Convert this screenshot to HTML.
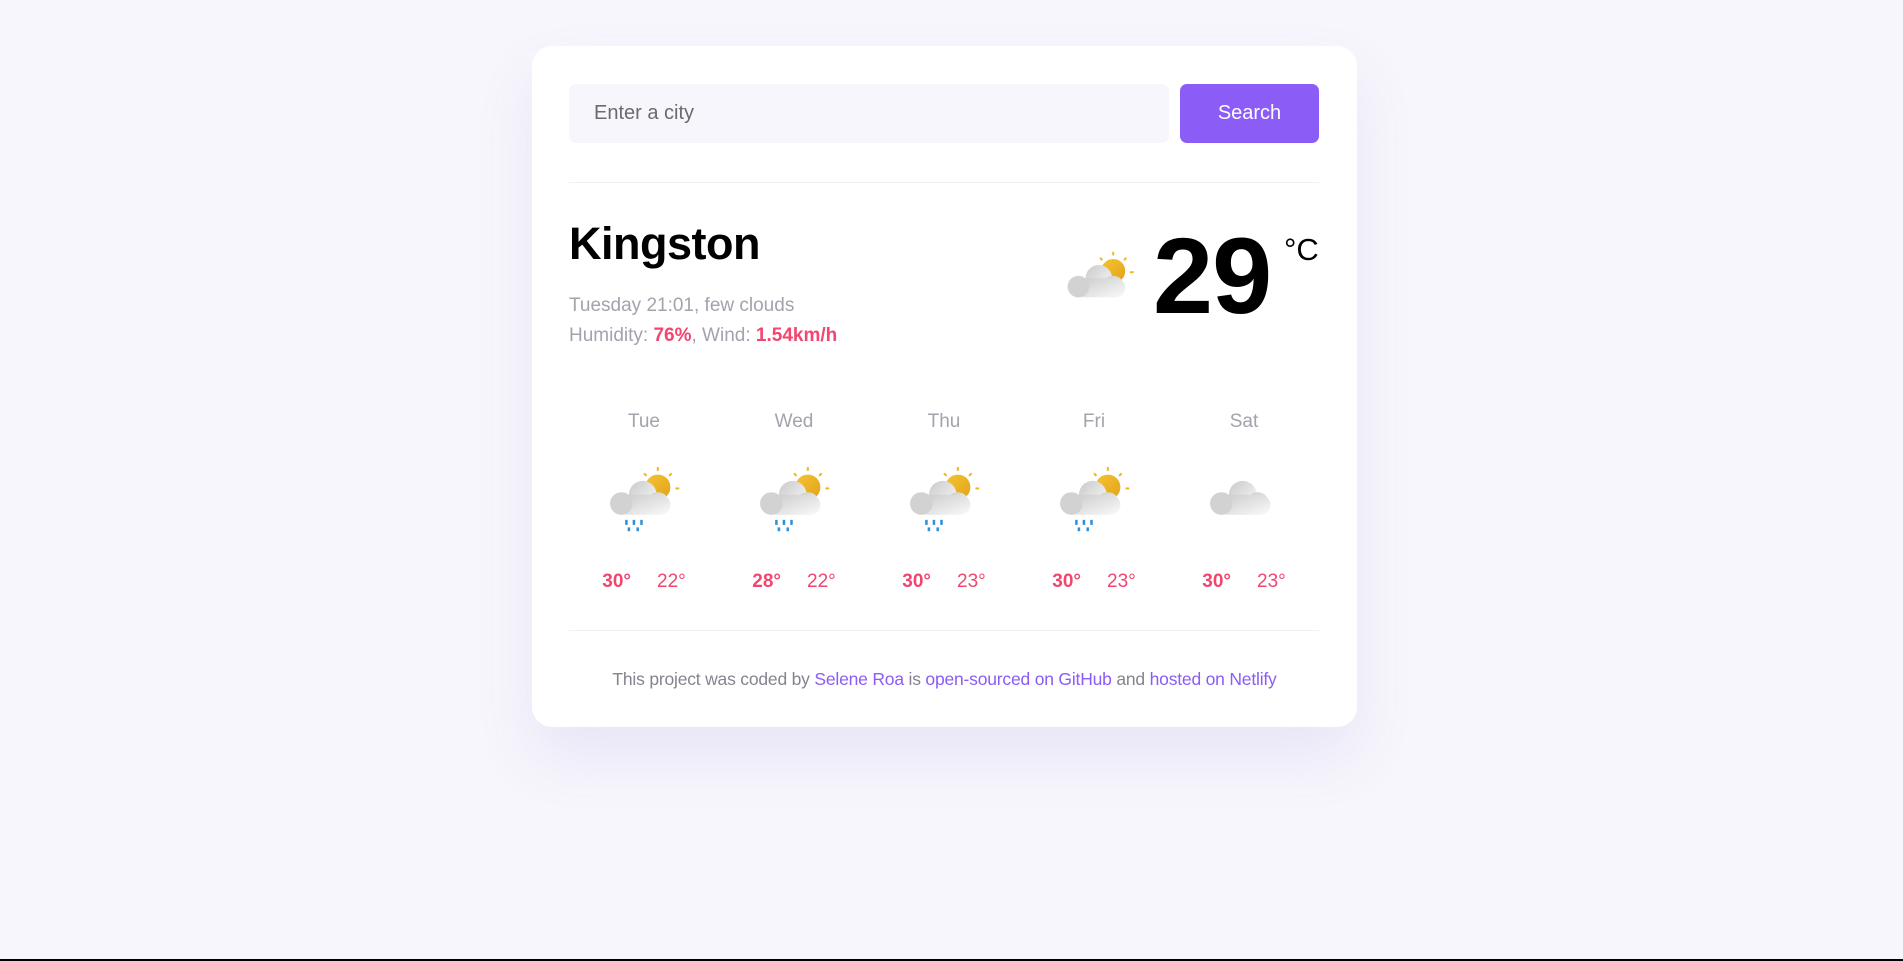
<!DOCTYPE html>
<html><head><meta charset="utf-8"><style>
*{box-sizing:border-box;margin:0;padding:0}
html,body{width:1903px;height:961px;overflow:hidden}
body{background:#f7f6fc;font-family:"Liberation Sans",Arial,sans-serif;position:relative;border-bottom:2px solid #000}
.card{position:absolute;left:532px;top:46px;width:825px;height:681px;background:#fff;border-radius:20px;box-shadow:0 30px 60px rgba(110,90,200,0.10);padding:38px 38px 0 37px}
.row{display:flex;gap:11px;height:59px}
.inp{flex:1;background:#f7f6fc;border-radius:7px;font-size:20px;color:#6b6b6b;padding:0 25px;line-height:59px}
.btn{width:139px;background:#8b5cf6;border-radius:7px;color:#fff;font-size:20px;text-align:center;line-height:59px}
.hr{height:1px;background:#f1f0f5;margin-top:39px}
.city{position:absolute;left:37px;top:172px;font-size:45px;font-weight:bold;color:#000;letter-spacing:-0.5px}
.sub{position:absolute;left:37px;top:245px;font-size:19px;color:#a3a2ad;line-height:30px}
.sub b{color:#f0466f}
.big{position:absolute;left:621px;top:176px;font-size:108px;font-weight:bold;letter-spacing:-1px;line-height:1}
.unit{position:absolute;left:752px;top:186px;font-size:31px}
.fc{position:absolute;left:37px;top:365px;width:750px;display:flex}
.d{width:150px;text-align:center}
.dn{font-size:19px;color:#a3a2ad;height:20px}
.ic{height:140px;display:flex;justify-content:center;align-items:center}
.t{font-size:19px;color:#f0466f}
.t b{margin-right:26px}
.hr2{position:absolute;left:37px;right:38px;top:584px;height:1px;background:#f1f0f5}
.foot{position:absolute;left:0;right:0;top:623px;text-align:center;font-size:17.5px;color:#85838f;letter-spacing:-0.2px}
.foot a{color:#8b5cf6;text-decoration:none}
</style></head><body>
<svg width="0" height="0" style="position:absolute"><defs>
<linearGradient id="cg" x1="0" y1="0" x2="1" y2="1"><stop offset="0" stop-color="#c9c9c9"/><stop offset="1" stop-color="#fafafa"/></linearGradient>
<linearGradient id="sg" x1="0" y1="0" x2="1" y2="1"><stop offset="0" stop-color="#f5c431"/><stop offset="1" stop-color="#e2a21a"/></linearGradient>
<g id="sun"><circle cx="46" cy="20" r="10" fill="url(#sg)"/><g stroke="#f2b423" stroke-width="1.6"><line x1="46" y1="4" x2="46" y2="7"/><line x1="35" y1="9" x2="37" y2="11"/><line x1="57" y1="9" x2="55" y2="11"/><line x1="60" y1="21" x2="63" y2="21"/></g></g>
<g id="cloud"><circle cx="34" cy="26" r="11" fill="url(#cg)"/><circle cx="46" cy="33" r="9" fill="url(#cg)"/><rect x="14" y="26" width="42" height="16" rx="8" fill="url(#cg)"/><circle cx="17" cy="33" r="9" fill="#d2d2d2"/></g>
<g id="rain" fill="#2e90d6"><rect x="20" y="46" width="2" height="4"/><rect x="26" y="46" width="2" height="4"/><rect x="32" y="46" width="2" height="4"/><rect x="22" y="52" width="2" height="3"/><rect x="29" y="52" width="2" height="3"/></g>
</defs></svg>
<div class="card">
<div class="row"><div class="inp">Enter a city</div><div class="btn">Search</div></div>
<div class="hr"></div>
<div class="city">Kingston</div>
<div class="sub">Tuesday 21:01, few clouds<br>Humidity: <b>76%</b>, Wind: <b>1.54km/h</b></div>
<svg style="position:absolute;left:526px;top:201px" width="84" height="72" viewBox="0 0 70 60"><use href="#sun"/><use href="#cloud"/></svg>
<div class="big">29</div><div class="unit">°C</div>
<div class="fc">
<div class="d"><div class="dn">Tue</div><div class="ic"><svg width="88" height="78" viewBox="0 0 70 62"><use href="#sun"/><use href="#cloud"/><use href="#rain"/></svg></div><div class="t"><b>30°</b>22°</div></div>
<div class="d"><div class="dn">Wed</div><div class="ic"><svg width="88" height="78" viewBox="0 0 70 62"><use href="#sun"/><use href="#cloud"/><use href="#rain"/></svg></div><div class="t"><b>28°</b>22°</div></div>
<div class="d"><div class="dn">Thu</div><div class="ic"><svg width="88" height="78" viewBox="0 0 70 62"><use href="#sun"/><use href="#cloud"/><use href="#rain"/></svg></div><div class="t"><b>30°</b>23°</div></div>
<div class="d"><div class="dn">Fri</div><div class="ic"><svg width="88" height="78" viewBox="0 0 70 62"><use href="#sun"/><use href="#cloud"/><use href="#rain"/></svg></div><div class="t"><b>30°</b>23°</div></div>
<div class="d"><div class="dn">Sat</div><div class="ic"><svg width="88" height="78" viewBox="0 0 70 62"><use href="#cloud"/></svg></div><div class="t"><b>30°</b>23°</div></div>
</div>
<div class="hr2"></div>
<div class="foot">This project was coded by <a>Selene Roa</a> is <a>open-sourced on GitHub</a> and <a>hosted on Netlify</a></div>
</div>
</body></html>
